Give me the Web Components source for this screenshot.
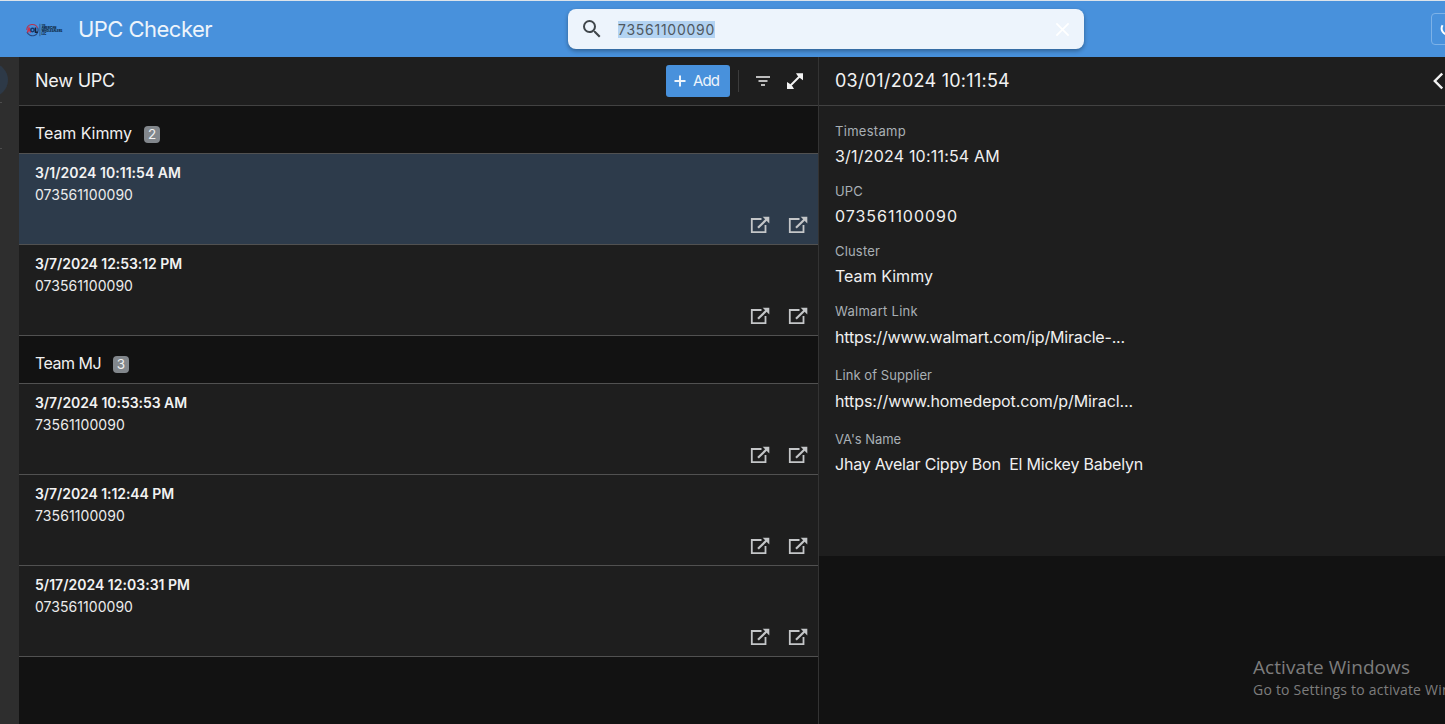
<!DOCTYPE html>
<html lang="en">
<head>
<meta charset="utf-8">
<title>UPC Checker</title>
<style>
html, body { margin: 0; height: 100%; overflow: hidden; background: #121212; }
body { font-family: Inter, "Liberation Sans", sans-serif; color: #ececec; }
</style>
</head>
<body>
<upc-app></upc-app>
<script>
const define = (name, html, setup) => customElements.define(name, class extends HTMLElement {
  connectedCallback() {
    if (this.shadowRoot) return;
    this.attachShadow({ mode: 'open' }).innerHTML = typeof html === 'function' ? html(this) : html;
    if (setup) setup(this);
  }
});

// Single line of text, tracked so that it spans its `w` attribute in pixels.
define('fit-text', '<style>:host{display:block;white-space:pre;width:max-content}span{display:inline-block}</style><span><slot></slot></span>', el => {
  const span = el.shadowRoot.querySelector('span');
  const target = +el.getAttribute('w');
  const n = el.textContent.length;
  if (target && n) span.style.letterSpacing = ((target - span.getBoundingClientRect().width) / n) + 'px';
});

const icons = {
  search: ['0 0 24 24', '<path fill="currentColor" d="M15.5 14h-.79l-.28-.27A6.47 6.47 0 0 0 16 9.5 6.5 6.5 0 1 0 9.5 16c1.61 0 3.09-.59 4.23-1.57l.27.28v.79l5 4.99L20.49 19l-4.99-5zm-6 0a4.5 4.5 0 1 1 0-9 4.5 4.5 0 0 1 0 9z"/>'],
  close: ['0 0 16 16', '<path fill="none" stroke="currentColor" stroke-width="1.8" d="M1.5 1.5l13 13M14.5 1.5l-13 13"/>'],
  plus: ['0 0 12 12', '<path fill="none" stroke="currentColor" stroke-width="2" d="M6 .5v11M.5 6h11"/>'],
  filter: ['0 0 14 10', '<path fill="none" stroke="currentColor" stroke-width="1.7" d="M0 1h14M2.5 5h9M5 9h4"/>'],
  expand: ['0 0 18 18', '<path fill="none" stroke="currentColor" stroke-width="2" d="M3.5 14.5l11-11"/><path fill="currentColor" d="M10 1.2H17V8.2L14.6 6.6 11.4 3.4zM1 10V17h7L6.6 14.6 3.4 11.4z"/>'],
  open: ['0 0 20 18', '<path fill="none" stroke="currentColor" stroke-width="1.8" d="M11.5 3H1.8v13.2h13.7V9"/><path fill="none" stroke="currentColor" stroke-width="2.2" d="M8 11.8L17 3"/><path fill="currentColor" d="M12.7 .8H19.3V7.4z"/>'],
  back: ['0 0 10 18', '<path fill="none" stroke="currentColor" stroke-width="2.4" d="M9.2 1.5L1.8 9 9.2 16.5"/>'],
  sync: ['0 0 16 16', '<path fill="none" stroke="currentColor" stroke-width="2" d="M2.6 4.2A6 6 0 0 0 8 13.4"/>'],
  logo: ['0 0 37 14', '<g fill="none"><path stroke="#b5344f" stroke-width="1.1" d="M.8 7a5.6 5.6 0 0 1 10.8-2"/><path stroke="#29477d" stroke-width="1.1" d="M11.8 5A5.7 5.7 0 0 1 1 9"/><path stroke="#d0304a" stroke-width="1.6" d="M1.5 9.5L3 5.2l1.7 4.3"/><circle cx="6.5" cy="7" r="1.7" stroke="#16396f" stroke-width="1.5"/><path stroke="#16233c" stroke-width="1.5" d="M9.5 4.5v4.8h2.3"/><path stroke="#224a78" stroke-width=".7" d="M13.9.8v12.4"/></g><g fill="#0e2744" font-family="Inter,sans-serif" font-weight="900"><text x="15.4" y="2.6" font-size="2">THE</text><text x="15.4" y="6" font-size="3.6" textLength="15" lengthAdjust="spacingAndGlyphs">AMERICAN</text><text x="15.4" y="9.2" font-size="3.6" textLength="21" lengthAdjust="spacingAndGlyphs">WHOLESALERS</text><text x="15.4" y="12.4" font-size="3" textLength="5" lengthAdjust="spacingAndGlyphs">LLC</text></g>']
};
define('ui-icon', el => {
  const [box, art] = icons[el.getAttribute('name')];
  return `<style>:host{display:block;flex:none}svg{display:block;width:100%;height:100%}</style><svg viewBox="${box}">${art}</svg>`;
});

define('app-header', `
<style>
:host{display:grid;grid-template-columns:568px 516px 347px 1fr;height:56px;border-top:1px solid #dce3ea;box-sizing:border-box;height:57px;background:#4891dc;align-items:center;overflow:hidden}
.brand{display:flex;align-items:center;padding-left:26px;gap:15px}
.brand ui-icon{width:37px;height:14px;margin-top:1px}
.brand fit-text{font-size:22px;line-height:30px;color:#edf4fb}
.search{display:flex;align-items:center;height:40px;border-radius:8px;background:#edf4fc;box-shadow:0 2px 4px #0005;box-sizing:border-box;padding:0 14px 0 12px}
.search .mag{width:24px;height:24px;color:#40464b}
.search fit-text{font-size:14px;line-height:17px;background:#b3d3f2;color:#50585f;margin:1px auto 0 14px}
.search .x{width:15px;height:15px;color:#fff}
.sync{width:40px;height:30px;border:1px solid #7db2e8;border-radius:4px;display:flex;align-items:center}
.sync ui-icon{width:16px;height:16px;margin-left:8px;color:#fff}
</style>
<div class="brand"><ui-icon name="logo"></ui-icon><fit-text w="134">UPC Checker</fit-text></div>
<div class="search"><ui-icon class="mag" name="search"></ui-icon><fit-text w="97">73561100090</fit-text><ui-icon class="x" name="close"></ui-icon></div>
<span></span><div class="sync"><ui-icon name="sync"></ui-icon></div>`);

define('side-rail', `
<style>
:host{display:block;background:#2e2e2e;overflow:hidden}
.dot{width:34px;height:34px;border-radius:50%;background:#2d3947;margin:6px 0 0 -26px}
i{display:block;width:2px;height:1px;background:#4c4c4c;margin-top:5px}
i+i{margin-top:45px}
</style><div class="dot"></div><i></i><i></i>`);

define('panel-bar', `
<style>
:host{display:flex;align-items:center;height:48px;border-bottom:1px solid #424242;background:#1e1e1e;padding:0 0 0 16px;font-size:18px;line-height:24px;color:#f2f2f2}
.actions{margin-left:auto;display:flex;align-items:center}
</style><slot></slot><div class="actions"><slot name="actions"></slot></div>`);

define('add-button', `
<style>
:host{display:flex;align-items:center;width:64px;height:32px;border-radius:3px;background:#4891dc;color:#edf4fb;font-size:15px;line-height:20px;box-sizing:border-box;padding-left:8px;gap:7px}
ui-icon{width:12px;height:12px}
</style><ui-icon name="plus"></ui-icon><fit-text w="26">Add</fit-text>`);

define('group-head', el => `
<style>
:host{display:flex;align-items:center;height:47px;border-bottom:1px solid #515151;padding:0 16px;background:#121212;font-size:16px;line-height:22px;color:#f0f0f0}
fit-text{margin-top:7px}
b{font-weight:400;font-size:13.5px;line-height:17px;width:16px;height:17px;border-radius:4px;background:#82878c;text-align:center;margin:10px 0 0 12px}
</style><fit-text w="${el.getAttribute('w')}">${el.getAttribute('label')}</fit-text><b>${el.getAttribute('count')}</b>`);

define('upc-row', el => `
<style>
:host{display:flex;flex-direction:column;height:90px;border-bottom:1px solid #515151;background:#1e1e1e;padding:0 10px 0 16px;box-sizing:content-box;font-size:14px;color:#ececec}
:host([selected]){background:#2d3b4b}
.date{font-weight:600;line-height:20px;margin-top:9px;color:#f2f2f2}
.upc{line-height:20px;margin-top:2px}
.links{display:flex;justify-content:flex-end;gap:18px;margin-top:11px;color:#c4c6c8}
.links ui-icon{width:20px;height:18px}
</style>
<fit-text class="date" w="${el.getAttribute('w')}">${el.getAttribute('date')}</fit-text>
<fit-text class="upc" w="${el.getAttribute('uw')}">${el.getAttribute('upc')}</fit-text>
<div class="links"><ui-icon name="open"></ui-icon><ui-icon name="open"></ui-icon></div>`);

define('detail-field', el => `
<style>
:host{display:block;height:60px}
:host([link]){height:64px}
.label{font-size:13px;line-height:18px;color:#a9b0b5}
.value{font-size:16px;line-height:22px;margin-top:5px;color:#f0f0f0}
:host([link]) .value{margin-top:6px}
</style>
<fit-text class="label" w="${el.getAttribute('lw')}">${el.getAttribute('label')}</fit-text>
<fit-text class="value" w="${el.getAttribute('w')}">${el.getAttribute('value')}</fit-text>`);

define('windows-notice', `
<style>
:host{position:absolute;left:1253px;top:655px;font-family:"Open Sans","Noto Sans",sans-serif;color:#7d7d7d}
.a{font-size:19px;line-height:24px}
.b{font-size:14px;line-height:20px;margin-top:1px}
</style><fit-text class="a" w="157">Activate Windows</fit-text><fit-text class="b" w="237">Go to Settings to activate Windows.</fit-text>`);

define('upc-app', `
<style>
:host{display:flex;flex-direction:column;width:1445px;height:724px;overflow:hidden;position:relative}
main{flex:1;display:grid;grid-template-columns:19px 799px 1fr;min-height:0}
.detail{border-left:1px solid #333}
.fields{background:#1e1e1e;height:434px;padding:16px 16px 0;box-sizing:content-box}
.sep{width:1px;height:22px;background:#3c3c3c;margin-left:8px}
.filter{width:14px;height:10px;margin-left:17px}
.expand{width:18px;height:18px;margin:0 14px 0 16px}
.back{width:10px;height:18px;margin-right:2px}
</style>
<app-header></app-header>
<main>
<side-rail></side-rail>
<section>
<panel-bar><fit-text w="80">New UPC</fit-text><add-button slot="actions"></add-button><span class="sep" slot="actions"></span><ui-icon class="filter" slot="actions" name="filter"></ui-icon><ui-icon class="expand" slot="actions" name="expand"></ui-icon></panel-bar>
<group-head label="Team Kimmy" w="97" count="2"></group-head>
<upc-row selected date="3/1/2024 10:11:54 AM" w="146" upc="073561100090" uw="98"></upc-row>
<upc-row date="3/7/2024 12:53:12 PM" w="147" upc="073561100090" uw="98"></upc-row>
<group-head label="Team MJ" w="66" count="3"></group-head>
<upc-row date="3/7/2024 10:53:53 AM" w="152" upc="73561100090" uw="90"></upc-row>
<upc-row date="3/7/2024 1:12:44 PM" w="139" upc="73561100090" uw="90"></upc-row>
<upc-row date="5/17/2024 12:03:31 PM" w="155" upc="073561100090" uw="98"></upc-row>
</section>
<section class="detail">
<panel-bar><fit-text w="175">03/01/2024 10:11:54</fit-text><ui-icon class="back" slot="actions" name="back"></ui-icon></panel-bar>
<div class="fields">
<detail-field label="Timestamp" lw="71" w="165" value="3/1/2024 10:11:54 AM"></detail-field>
<detail-field label="UPC" lw="28" w="123" value="073561100090"></detail-field>
<detail-field label="Cluster" lw="45" w="98" value="Team Kimmy"></detail-field>
<detail-field link label="Walmart Link" lw="83" w="290" value="https://www.walmart.com/ip/Miracle-..."></detail-field>
<detail-field link label="Link of Supplier" lw="97" w="298" value="https://www.homedepot.com/p/Miracl..."></detail-field>
<detail-field label="VA's Name" lw="66" w="308" value="Jhay Avelar Cippy Bon  El Mickey Babelyn"></detail-field>
</div>
</section>
</main>
<windows-notice></windows-notice>`);
</script>
</body>
</html>
